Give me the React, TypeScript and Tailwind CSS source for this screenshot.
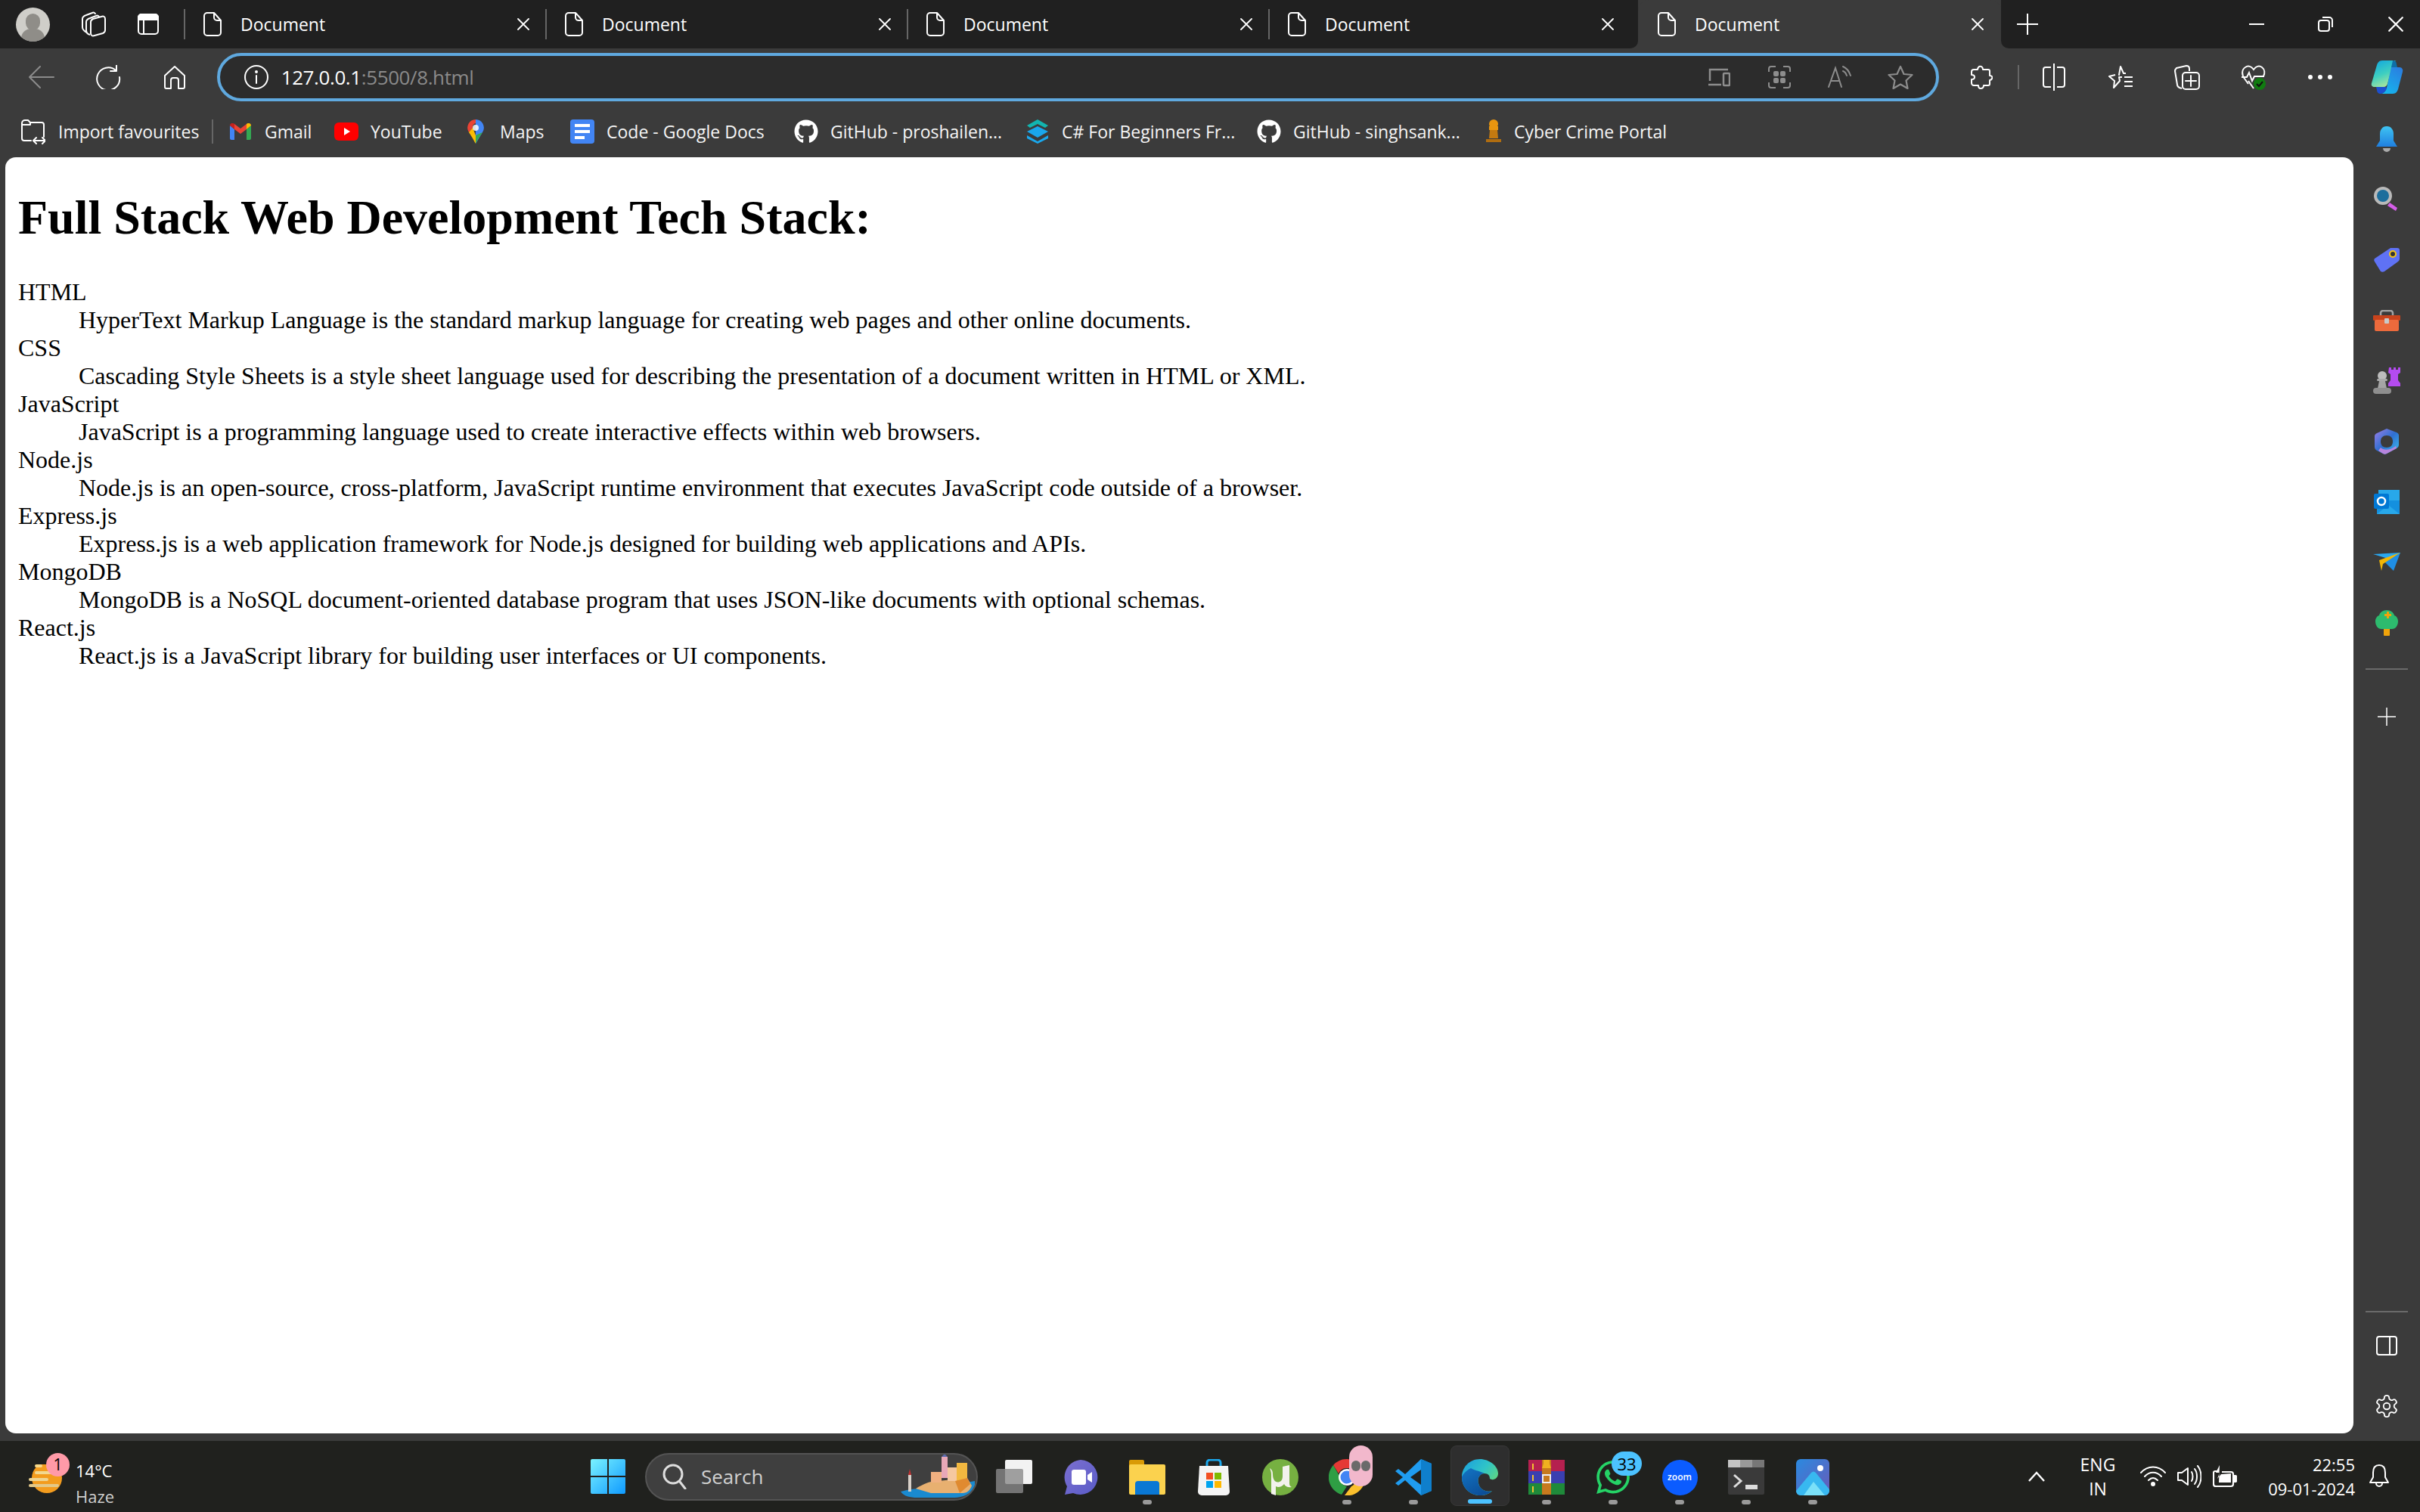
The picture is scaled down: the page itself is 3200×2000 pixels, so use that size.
import React from 'react';
import { FaGithub, FaWhatsapp } from 'react-icons/fa';

const UI_FONT = "font-['Open_Sans','Noto_Sans',sans-serif]";

const FileIcon = () => (
  <svg width="24" height="32" viewBox="0 0 24 32" fill="none" stroke="#fff" strokeWidth="2" strokeLinejoin="round">
    <path d="M1 5a4 4 0 014-4h9l9 10v16a4 4 0 01-4 4H5a4 4 0 01-4-4z" />
    <path d="M14 1v6a4 4 0 004 4h5" />
  </svg>
);

const CloseIcon = ({ size = 16 }: { size?: number }) => (
  <svg width={size} height={size} viewBox="0 0 16 16" stroke="#fff" strokeWidth="1.8" strokeLinecap="round">
    <path d="M1 1l14 14M15 1L1 15" />
  </svg>
);

const Divider = () => <div className="w-[2px] h-[40px] bg-[#666]" />;

const Tab = () => (
  <div className="w-[476px] h-[64px] flex items-center pl-[24px] pr-[21px]">
    <FileIcon />
    <span className="ml-[25px] text-[23px] text-white">Document</span>
    <span className="ml-auto flex">
      <CloseIcon />
    </span>
  </div>
);

const TabStrip = () => (
  <div className="flex h-[64px] bg-[#3b3b3b]">
    <div className="flex items-center w-[2166px] bg-[#202020] rounded-br-[10px]">
      <div className="ml-[21px] w-[45px] h-[45px] rounded-full bg-[#cfcec9] relative overflow-hidden">
        <div className="absolute left-[13px] top-[8px] w-[19px] h-[22px] rounded-full bg-[#8f8d88]" />
        <div className="absolute left-[7px] top-[28px] w-[31px] h-[26px] rounded-full bg-[#8f8d88]" />
      </div>
      <div className="ml-[41px] flex">
        <svg width="34" height="34" viewBox="0 0 34 34" fill="none" stroke="#fff" strokeWidth="2" strokeLinejoin="round">
          <path d="M8 28C4 26 2 24 2 21V10c0-3 2-4 5-5l8-3c2-1 4 0 4 2" />
          <path d="M12 31c-4-1-5-3-5-6V14c0-3 2-4 5-5l8-3c2-1 4 0 4 2" />
          <path d="M13 14c0-2 1-3 3-4l11-3c3-1 5 0 5 3v15c0 2-1 3-3 4l-11 3c-3 1-5 0-5-3z" />
        </svg>
      </div>
      <div className="ml-[41px] flex">
        <svg width="28" height="28" viewBox="0 0 28 28" fill="none" stroke="#fff" strokeWidth="2">
          <rect x="1" y="1" width="26" height="26" rx="4" />
          <path d="M1 8h26V5a4 4 0 00-4-4H5a4 4 0 00-4 4z" fill="#fff" />
          <path d="M8 8v19" />
        </svg>
      </div>
      <div className="ml-[33px]"><Divider /></div>
      <Tab />
      <Divider />
      <Tab />
      <Divider />
      <Tab />
      <Divider />
      <Tab />
    </div>
    <div className="w-[480px] h-[64px] flex items-center pl-[26px] pr-[23px] bg-[#3b3b3b] rounded-t-[14px]">
      <FileIcon />
      <span className="ml-[25px] text-[23px] text-white">Document</span>
      <span className="ml-auto flex">
        <CloseIcon />
      </span>
    </div>
    <div className="flex-1 flex items-center bg-[#202020] rounded-bl-[10px]">
      <svg className="ml-[21px]" width="28" height="28" viewBox="0 0 28 28" stroke="#fff" strokeWidth="2">
        <path d="M14 0v28M0 14h28" />
      </svg>
      <div className="ml-[279px] w-[20px] h-[2px] bg-white" />
      <svg className="ml-[71px]" width="20" height="20" viewBox="0 0 20 20" fill="none" stroke="#fff" strokeWidth="2">
        <rect x="1" y="5" width="14" height="14" rx="3" />
        <path d="M6 1h9a4 4 0 014 4v9" />
      </svg>
      <div className="ml-[73px] flex">
        <CloseIcon size={20} />
      </div>
    </div>
  </div>
);

const ToolCell = ({ children }: { children: React.ReactNode }) => (
  <div className="w-[88px] flex items-center justify-center">{children}</div>
);

const AddrCell = ({ children }: { children: React.ReactNode }) => (
  <div className="w-[80px] flex items-center justify-center">{children}</div>
);

const Toolbar = () => (
  <div className="h-[76px] flex items-center pl-[11px] bg-[#3b3b3b]">
    <ToolCell>
      <svg width="34" height="30" viewBox="0 0 34 30" fill="none" stroke="#8b8b8b" strokeWidth="2" strokeLinecap="round" strokeLinejoin="round">
        <path d="M15 1L1 15l14 14M1 15h32" />
      </svg>
    </ToolCell>
    <ToolCell>
      <svg width="34" height="32" viewBox="0 0 34 32" fill="none" stroke="#fff" strokeWidth="2" strokeLinecap="round" strokeLinejoin="round">
        <path d="M27 7A15 15 0 1032 16" />
        <path d="M28 0v8h-8" />
      </svg>
    </ToolCell>
    <ToolCell>
      <svg width="30" height="32" viewBox="0 0 30 32" fill="none" stroke="#fff" strokeWidth="2" strokeLinejoin="round">
        <path d="M2 14L15 2l13 12v15a2 2 0 01-2 2h-6V20a3 3 0 00-3-3h-4a3 3 0 00-3 3v11H4a2 2 0 01-2-2z" />
      </svg>
    </ToolCell>
    <div className="ml-[12px] w-[2280px] h-[64px] flex items-center rounded-full border-[4px] border-[#5fa9df] bg-[#2c2c2c] pl-[32px] pr-[7px]">
      <svg width="32" height="32" viewBox="0 0 32 32" fill="none" stroke="#fff" strokeWidth="2" strokeLinecap="round">
        <circle cx="16" cy="16" r="15" />
        <path d="M16 14v10" />
        <circle cx="16" cy="9" r="1" fill="#fff" />
      </svg>
      <span className="ml-[17px] text-[26px] text-white tracking-[-0.4px]">
        127.0.0.1<span className="text-[#8a8a8a]">:5500/8.html</span>
      </span>
      <div className="ml-auto flex">
        <AddrCell>
          <svg width="30" height="26" viewBox="0 0 30 26" fill="none" stroke="#8d8d8d" strokeWidth="2.5">
            <path d="M3 18V3h24M1 23h17" />
            <rect x="21" y="8" width="8" height="16" rx="1" />
          </svg>
        </AddrCell>
        <AddrCell>
          <svg width="30" height="30" viewBox="0 0 30 30" fill="none" stroke="#8d8d8d" strokeWidth="2">
            <path d="M1 8V4a3 3 0 013-3h6M20 1h6a3 3 0 013 3v4M29 22v4a3 3 0 01-3 3h-6M10 29H4a3 3 0 01-3-3v-4" />
            <g fill="#8d8d8d" stroke="none">
              <rect x="7" y="7" width="7" height="7" rx="2" />
              <rect x="16" y="7" width="7" height="7" rx="2" />
              <rect x="7" y="16" width="7" height="7" rx="2" />
              <rect x="16" y="16" width="7" height="7" rx="2" />
            </g>
          </svg>
        </AddrCell>
        <AddrCell>
          <svg width="32" height="30" viewBox="0 0 32 30" fill="none" stroke="#8d8d8d" strokeWidth="2" strokeLinecap="round">
            <path d="M1 28L10 3l8 25M4 20h11" />
            <path d="M20 1c5 2 8 6 10 12M20 7c3 1 4 3 5 6" />
          </svg>
        </AddrCell>
        <AddrCell>
          <svg width="34" height="32" viewBox="0 0 34 32" fill="none" stroke="#8d8d8d" strokeWidth="2.2" strokeLinejoin="round">
            <path d="M17 2l4.5 10 11 1-8 7.5 2 10.5-9.500-5.500L7.500 31l2-10.500-8-7.500 11-1z" />
          </svg>
        </AddrCell>
      </div>
    </div>
    <div className="ml-[12px] flex">
      <ToolCell>
        <svg width="30" height="32" viewBox="0 0 30 32" fill="none" stroke="#fff" strokeWidth="2" strokeLinejoin="round">
          <path d="M12 2c3-1 5 1 5 4h7c1 0 2 1 2 2v6c3 0 4 2 3 4s-3 2-3 2v5c0 1-1 2-2 2h-6c0 3-2 4-4 4s-3-2-3-4H5c-2 0-3-2-3-3v-5c2 0 4-1 4-3s-2-3-4-3V9c0-2 1-3 3-3h5c0-2 1-3 2-4z" />
        </svg>
      </ToolCell>
      <div className="w-[2px] h-[32px] bg-[#666] self-center ml-[4px] mr-[2px]" />
      <ToolCell>
        <svg width="30" height="36" viewBox="0 0 30 36" fill="none" stroke="#fff" strokeWidth="2">
          <path d="M15 0v36" />
          <path d="M11 5H4a3 3 0 00-3 3v20a3 3 0 003 3h7M19 5h7a3 3 0 013 3v20a3 3 0 01-3 3h-7" />
        </svg>
      </ToolCell>
      <ToolCell>
        <svg width="32" height="32" viewBox="0 0 32 32" fill="none" stroke="#fff" strokeWidth="2" strokeLinejoin="round">
          <path d="M15 13h-1l2-11 4 9h3M18 16h-4l1 5-8 9 1-9-7-6 8-2" />
          <path d="M21 16h11M21 22h11M21 28h11" />
        </svg>
      </ToolCell>
      <ToolCell>
        <svg width="34" height="34" viewBox="0 0 34 34" fill="none" stroke="#fff" strokeWidth="2" strokeLinejoin="round">
          <path d="M10 32l-3-1c-2-1-3-2-3-4L1 9c0-2 1-3 2-4l13-3c2 0 4 1 4 4v3" />
          <rect x="11" y="11" width="22" height="22" rx="4" />
          <path d="M22 15v14M15 22h14" strokeLinecap="round" />
        </svg>
      </ToolCell>
      <ToolCell>
        <svg width="34" height="34" viewBox="0 0 34 34" fill="none">
          <path d="M10 26l-5-7C1 14 1 7 6 4c4-3 8-1 11 3 3-4 7-6 11-3 4 3 4 8 2 12" stroke="#fff" strokeWidth="2" />
          <path d="M1 17h7l3-6 4 11 3-6h13" stroke="#fff" strokeWidth="2" />
          <path d="M10 22l7 10" stroke="#fff" strokeWidth="2" />
          <circle cx="25" cy="26" r="8" fill="#107c10" />
          <path d="M21 26l3 3 5-6" stroke="#111" strokeWidth="2" />
        </svg>
      </ToolCell>
      <ToolCell>
        <div className="flex gap-[7px]">
          <div className="w-[6px] h-[6px] rounded-full bg-white" />
          <div className="w-[6px] h-[6px] rounded-full bg-white" />
          <div className="w-[6px] h-[6px] rounded-full bg-white" />
        </div>
      </ToolCell>
      <ToolCell>
        <svg width="44" height="44" viewBox="0 0 44 44">
          <defs>
            <linearGradient id="cpA" x1="0" y1="0" x2="0.4" y2="1">
              <stop offset="0" stopColor="#0ea5e2" />
              <stop offset="0.6" stopColor="#3fcfc0" />
              <stop offset="1" stopColor="#9fe3a0" />
            </linearGradient>
            <linearGradient id="cpB" x1="0.8" y1="0" x2="0.2" y2="1">
              <stop offset="0" stopColor="#2a7fe0" />
              <stop offset="1" stopColor="#15b6ee" />
            </linearGradient>
          </defs>
          <path d="M30 0h-14c-4 0-6 3-7 6L2 30c-1 3 1 5 4 5h12c3 0 4-2 5-4l6-22c1-4 3-9 6-9z" fill="url(#cpA)" />
          <path d="M30 0c3 0 5 2 5 5l1 4-8 0z" fill="#0e6fa8" />
          <path d="M14 44h16c4 0 6-3 7-6l6-23c1-3-1-6-4-6H28l-6 27c-1 4-4 8-8 8z" fill="url(#cpB)" />
          <path d="M14 44c-3 0-5-2-5-5l-1-4h12l2 1c-1 4-4 8-8 8z" fill="#1c4fd0" />
        </svg>
      </ToolCell>
    </div>
  </div>
);

const Gmail = () => (
  <svg width="28" height="22" viewBox="0 0 28 22">
    <path d="M0 3v17a2 2 0 002 2h4V8z" fill="#4285f4" />
    <path d="M28 3v17a2 2 0 01-2 2h-4V8z" fill="#34a853" />
    <path d="M6 8l8 6 8-6V1l-8 6-8-6z" fill="#ea4335" />
    <path d="M0 3c0-3 4-4 6-2v7L0 3z" fill="#c5221f" />
    <path d="M28 3c0-3-4-4-6-2v7l6-5z" fill="#fbbc04" />
  </svg>
);

const YouTube = () => (
  <svg width="32" height="24" viewBox="0 0 32 24">
    <rect width="32" height="24" rx="6" fill="#f00" />
    <path d="M13 7l8 5-8 5z" fill="#fff" />
  </svg>
);

const MapsPin = () => (
  <svg width="22" height="32" viewBox="0 0 22 32">
    <path d="M11 0a11 11 0 019 17L11 32z" fill="#4285f4" />
    <path d="M11 0A11 11 0 002 17l5-6a5 5 0 014-6z" fill="#ea4335" />
    <path d="M2 17c2 3 4 6 9 15l0-11-4-10z" fill="#fbbc04" />
    <path d="M11 32c2-5 5-9 9-15l-9 4z" fill="#34a853" />
    <circle cx="11" cy="11" r="4" fill="#fff" opacity="0.85" />
  </svg>
);

const DocsIcon = () => (
  <svg width="32" height="32" viewBox="0 0 32 32">
    <rect width="32" height="32" rx="4" fill="#4285f4" />
    <path d="M6 6h20v4H6zM6 14h20v4H6zM6 22h13v4H6z" fill="#fff" />
  </svg>
);

const StackIcon = () => (
  <svg width="32" height="32" viewBox="0 0 32 32">
    <path d="M16 0l14 8-4 3-10-5-10 5-4-3z" fill="#12b5b0" />
    <path d="M16 9l14 7-14 8-14-8z" fill="#1aa7ec" />
    <path d="M2 21l14 8 14-8v4l-14 7-14-7z" fill="#1aa7ec" />
  </svg>
);

const Emblem = () => (
  <svg width="22" height="32" viewBox="0 0 22 32" fill="#e8950f">
    <circle cx="11" cy="6" r="6" />
    <rect x="5" y="9" width="12" height="5" />
    <path d="M6 14h10l1 11H5z" fill="#c47a10" />
    <rect x="1" y="26" width="20" height="4" fill="#b06d10" />
  </svg>
);

const Bookmark = ({ icon, label, width }: { icon: React.ReactNode; label: string; width: string }) => (
  <div className={`flex items-center ${width}`}>
    <div className="w-[32px] flex justify-center">{icon}</div>
    <span className="ml-[16px] text-[23px] text-[#f5f5f5] whitespace-nowrap">{label}</span>
  </div>
);

const BookmarksBar = () => (
  <div className="h-[68px] flex items-center pl-[28px]">
    <svg width="32" height="34" viewBox="0 0 32 34" fill="none" stroke="#fff" strokeWidth="2" strokeLinecap="round" strokeLinejoin="round">
      <path d="M13 29H4a3 3 0 01-3-3V6a4 4 0 014-4h4l3 3h15a3 3 0 013 3v16" />
      <path d="M1 8h11V5" />
      <path d="M17 29h14M20 25l-4 4 4 4M28 25l4 4-4 4" />
    </svg>
    <span className="ml-[17px] text-[23px] text-[#f5f5f5] whitespace-nowrap w-[203px]">Import favourites</span>
    <div className="w-[2px] h-[32px] bg-[#666] mr-[20px]" />
    <Bookmark icon={<Gmail />} label="Gmail" width="w-[140px]" />
    <Bookmark icon={<YouTube />} label="YouTube" width="w-[171px]" />
    <Bookmark icon={<MapsPin />} label="Maps" width="w-[141px]" />
    <Bookmark icon={<DocsIcon />} label="Code - Google Docs" width="w-[296px]" />
    <Bookmark icon={<FaGithub className="text-white text-[32px]" />} label="GitHub - proshailen..." width="w-[306px]" />
    <Bookmark icon={<StackIcon />} label="C# For Beginners Fr..." width="w-[306px]" />
    <Bookmark icon={<FaGithub className="text-white text-[32px]" />} label="GitHub - singhsank..." width="w-[302px]" />
    <Bookmark icon={<Emblem />} label="Cyber Crime Portal" width="w-[240px]" />
  </div>
);

const STACK = [
  ['HTML', 'HyperText Markup Language is the standard markup language for creating web pages and other online documents.'],
  ['CSS', 'Cascading Style Sheets is a style sheet language used for describing the presentation of a document written in HTML or XML.'],
  ['JavaScript', 'JavaScript is a programming language used to create interactive effects within web browsers.'],
  ['Node.js', 'Node.js is an open-source, cross-platform, JavaScript runtime environment that executes JavaScript code outside of a browser.'],
  ['Express.js', 'Express.js is a web application framework for Node.js designed for building web applications and APIs.'],
  ['MongoDB', 'MongoDB is a NoSQL document-oriented database program that uses JSON-like documents with optional schemas.'],
  ['React.js', 'React.js is a JavaScript library for building user interfaces or UI components.'],
];

const Page = () => (
  <div className="ml-[7px] flex-1 rounded-[14px] bg-white pt-[43px] px-[17px] text-black font-['Liberation_Serif',serif]">
    <h1 className="text-[64px] leading-[74px] font-bold mb-[43px]">Full Stack Web Development Tech Stack:</h1>
    <dl className="text-[32px] leading-[37px]">
      {STACK.map(([term, desc]) => (
        <React.Fragment key={term}>
          <dt>{term}</dt>
          <dd className="ml-[80px]">{desc}</dd>
        </React.Fragment>
      ))}
    </dl>
  </div>
);

const SideCell = ({ children }: { children: React.ReactNode }) => (
  <div className="h-[80px] flex items-center justify-center">{children}</div>
);

const Sidebar = () => (
  <div className="w-[88px] flex flex-col pt-[4px] pb-[6px]">
    <SideCell>
      <svg width="28" height="34" viewBox="0 0 28 34">
        <defs>
          <linearGradient id="sbBell" x1="0" y1="0" x2="0" y2="1">
            <stop offset="0" stopColor="#3fc4f2" />
            <stop offset="1" stopColor="#1f7fe0" />
          </linearGradient>
        </defs>
        <path d="M9 29h10a5 5 0 01-10 0z" fill="#aaa" />
        <path d="M14 0c6 0 9 5 9 10v9l5 8H0l5-8v-9C5 5 8 0 14 0z" fill="url(#sbBell)" />
      </svg>
    </SideCell>
    <SideCell>
      <svg width="34" height="34" viewBox="0 0 34 34">
        <circle cx="12" cy="12" r="10" fill="#1d6e9c" stroke="#b9b9b9" strokeWidth="4" />
        <path d="M21 21l10 7-2 4-11-7z" fill="#d45ee8" />
      </svg>
    </SideCell>
    <SideCell>
      <svg width="34" height="32" viewBox="0 0 34 32">
        <path d="M22 0h9a3 3 0 013 3v11c0 2-1 3-2 4L14 31c-2 1-3 1-5 0L1 18c-1-1-1-3 0-4z" fill="#5f72f5" />
        <circle cx="25" cy="8" r="4" fill="#333" stroke="#f5c518" strokeWidth="2" />
      </svg>
    </SideCell>
    <SideCell>
      <svg width="36" height="28" viewBox="0 0 36 28">
        <path d="M10 8V4a3 3 0 013-3h10a3 3 0 013 3v4" fill="none" stroke="#a3a3a3" strokeWidth="2.5" />
        <rect y="7" width="36" height="7" rx="1" fill="#c8431c" />
        <rect x="2" y="13" width="32" height="15" rx="2" fill="#ec6a3c" />
        <rect x="15" y="11" width="6" height="7" rx="1" fill="#c9c9c9" />
      </svg>
    </SideCell>
    <SideCell>
      <svg width="36" height="36" viewBox="0 0 36 36">
        <path d="M21 0h3v3h3V0h3v3h3V0h3v7l-3 2v8l3 4v4H20v-4l3-4V9l-3-2z" fill="#b44bf0" />
        <circle cx="12" cy="11" r="6" fill="#bdbdbd" />
        <rect x="5" y="15" width="14" height="3" rx="1.500" fill="#aaa" />
        <path d="M8 18h8l2 10H6z" fill="#a5a5a5" />
        <rect y="27" width="24" height="8" rx="4" fill="#8f8f8f" />
      </svg>
    </SideCell>
    <SideCell>
      <svg width="32" height="34" viewBox="0 0 32 34">
        <defs>
          <linearGradient id="sbM" x1="0" y1="0" x2="1" y2="1">
            <stop offset="0" stopColor="#9c7ee8" />
            <stop offset="0.5" stopColor="#2f6fd0" />
            <stop offset="1" stopColor="#3ec0f0" />
          </linearGradient>
        </defs>
        <path d="M16 0l13 5c2 1 3 2 3 4v12c0 2-1 4-3 5l-13 7c-2 1-3 1-5 0L3 29c-2-1-3-3-3-5V10c0-2 1-3 3-4z" fill="url(#sbM)" />
        <path d="M16 9c5 0 8 3 8 8s-3 8-8 8-8-3-8-8 3-8 8-8z" fill="#3b3b3b" />
        <path d="M8 25c4 4 12 4 20-2l1 3-13 7c-2 1-3 1-5 0l-6-4z" fill="#b884dc" />
      </svg>
    </SideCell>
    <SideCell>
      <svg width="34" height="32" viewBox="0 0 34 32">
        <rect x="6" y="0" width="28" height="16" fill="#28a8ea" />
        <path d="M4 14h30v18H4z" fill="#1490df" />
        <path d="M4 32l15-12 15 12z" fill="#28a8ea" />
        <rect x="0" y="5" width="20" height="20" rx="2" fill="#0078d4" />
        <circle cx="10" cy="15" r="5" fill="none" stroke="#fff" strokeWidth="2.500" />
      </svg>
    </SideCell>
    <SideCell>
      <svg width="36" height="26" viewBox="0 0 36 26">
        <path d="M0 2l36-2-9 13L20 8z" fill="#2aa8f0" />
        <path d="M36 0L27 24 15 12z" fill="#1f8fe6" />
        <path d="M36 0L8 10l3 14 2-9z" fill="#f2b705" />
      </svg>
    </SideCell>
    <SideCell>
      <svg width="30" height="34" viewBox="0 0 30 34">
        <rect x="11" y="22" width="8" height="12" rx="1" fill="#f0a30a" />
        <path d="M15 0c5 0 9 3 10 7 3 1 5 4 5 8 0 5-3 10-8 10H8c-5 0-8-5-8-10 0-4 2-7 5-8 1-4 5-7 10-7z" fill="#2dbb6e" />
        <path d="M15 2h3v3h3v3h-3v3h-3V8h-3V5h3z" fill="#f0a30a" />
      </svg>
    </SideCell>
    <div className="mt-[20px] mx-[16px] h-[2px] bg-[#6a6a6a]" />
    <div className="mt-[22px]">
      <SideCell>
        <svg width="24" height="24" viewBox="0 0 24 24" stroke="#fff" strokeWidth="1.500">
          <path d="M12 0v24M0 12h24" />
        </svg>
      </SideCell>
    </div>
    <div className="mt-auto mb-[4px] mx-[16px] h-[2px] bg-[#6a6a6a]" />
    <SideCell>
      <svg width="28" height="26" viewBox="0 0 28 26" fill="none" stroke="#fff" strokeWidth="2">
        <rect x="1" y="1" width="26" height="24" rx="3" />
        <path d="M18 1v24" />
      </svg>
    </SideCell>
    <SideCell>
      <svg width="34" height="34" viewBox="0 0 24 24" fill="none" stroke="#fff" strokeWidth="1.300" strokeLinecap="round" strokeLinejoin="round">
        <path d="M12.220 2h-.44a2 2 0 0 0-2 2v.18a2 2 0 0 1-1 1.730l-.43.250a2 2 0 0 1-2 0l-.15-.080a2 2 0 0 0-2.730.730l-.22.380a2 2 0 0 0 .730 2.730l.15.100a2 2 0 0 1 1 1.720v.510a2 2 0 0 1-1 1.740l-.15.090a2 2 0 0 0-.730 2.730l.22.380a2 2 0 0 0 2.730.730l.15-.080a2 2 0 0 1 2 0l.43.250a2 2 0 0 1 1 1.730V20a2 2 0 0 0 2 2h.44a2 2 0 0 0 2-2v-.18a2 2 0 0 1 1-1.730l.43-.250a2 2 0 0 1 2 0l.15.080a2 2 0 0 0 2.730-.730l.22-.390a2 2 0 0 0-.730-2.730l-.15-.080a2 2 0 0 1-1-1.740v-.500a2 2 0 0 1 1-1.740l.15-.090a2 2 0 0 0 .730-2.730l-.22-.380a2 2 0 0 0-2.730-.730l-.15.080a2 2 0 0 1-2 0l-.43-.250a2 2 0 0 1-1-1.730V4a2 2 0 0 0-2-2z" />
        <circle cx="12" cy="12" r="3" />
      </svg>
    </SideCell>
  </div>
);

const TaskCell = ({ children, dot, active }: { children: React.ReactNode; dot?: boolean; active?: boolean }) => (
  <div className="w-[88px] h-[94px] relative flex justify-center pt-[24px]">
    {active && <div className="absolute left-[5px] top-[6px] w-[78px] h-[80px] rounded-[8px] bg-[#2e2e2e] border border-[#383838]" />}
    <div className="relative h-[48px] flex items-center justify-center">{children}</div>
    {dot && <div className="absolute left-[38px] top-[78px] w-[12px] h-[6px] rounded-full bg-[#9a9a9a]" />}
    {active && <div className="absolute left-[28px] top-[77px] w-[32px] h-[6px] rounded-full bg-[#4cc2ff]" />}
  </div>
);

const SearchScene = () => (
  <svg width="98" height="60" viewBox="0 0 98 60">
    <path d="M0 50c20-6 70-8 98-14v8c-6 10-16 14-30 14H22C12 58 4 56 0 50z" fill="#1a8ad0" />
    <path d="M20 46c10-6 18-10 30-10l38-4 6 10c-2 6-6 10-12 10H40z" fill="#e8b070" />
    <rect x="10" y="28" width="4" height="22" fill="#d8d0c8" />
    <path d="M10 28l2-8 2 8z" fill="#c03030" />
    <rect x="54" y="4" width="8" height="28" fill="#e8a8b8" />
    <rect x="40" y="24" width="14" height="14" fill="#f0b080" />
    <rect x="62" y="18" width="12" height="18" fill="#f5c8a0" />
    <rect x="74" y="12" width="14" height="24" fill="#f2b840" />
    <path d="M54 4l4-4 4 4z" fill="#5a6ab0" />
    <path d="M72 36l6 16 14-12-4-8z" fill="#e08a30" />
  </svg>
);

const Chrome = () => (
  <svg width="48" height="48" viewBox="0 0 48 48">
    <path d="M24 0a24 24 0 0121 12H24a12 12 0 00-11 7L6 8a24 24 0 0118-8z" fill="#e53935" />
    <path d="M6 8l8 14a12 12 0 0010 14l-7 11A24 24 0 016 8z" fill="#2f9e44" />
    <path d="M45 12a24 24 0 01-24 36l9-12a12 12 0 004-18z" fill="#fbc02d" />
    <circle cx="24" cy="24" r="11" fill="#fff" />
    <circle cx="24" cy="24" r="8.500" fill="#4285f4" />
  </svg>
);

const Edge = () => (
  <svg width="48" height="48" viewBox="0 0 48 48">
    <defs>
      <linearGradient id="edgeTop" x1="0" y1="0" x2="1" y2="0.800">
        <stop offset="0" stopColor="#1a9ce0" />
        <stop offset="0.5" stopColor="#2fc4c8" />
        <stop offset="1" stopColor="#72dc66" />
      </linearGradient>
      <linearGradient id="edgeLow" x1="0" y1="0" x2="0.600" y2="1">
        <stop offset="0" stopColor="#1374c4" />
        <stop offset="1" stopColor="#0c4f98" />
      </linearGradient>
    </defs>
    <path d="M24 0C10 0 0 11 0 24c0 14 11 24 24 24 7 0 12-2 16-6-6 2-16 0-18-10-2-7 2-13 8-13 5 0 7 3 7 7 4 3 11 0 11-7C48 9 36 0 24 0z" fill="url(#edgeTop)" />
    <path d="M12 12C4 16 0 22 0 24c0 14 11 24 24 24 7 0 12-2 16-6-6 2-16 0-18-10-2-7 2-13 8-13-8-4-14-4-18-7z" fill="url(#edgeLow)" />
  </svg>
);

const VsCode = () => (
  <svg width="48" height="48" viewBox="0 0 48 48">
    <path d="M34 0l14 6v36l-14 6L13 28l-9 7-4-3 10-8L0 16l4-3 9 7z" fill="#1f9cf0" />
    <path d="M34 0v48l14-6V6z" fill="#0f7fcc" />
    <path d="M34 13L20 24l14 11z" fill="#20212000" />
    <path d="M34 14L20 24l14 10z" fill="#20211e" />
  </svg>
);

const WinRar = () => (
  <svg width="48" height="46" viewBox="0 0 48 46">
    <rect y="0" width="48" height="15" fill="#b5204f" />
    <rect y="15" width="48" height="16" fill="#3a3fb0" />
    <rect y="31" width="48" height="15" fill="#1f8a3a" />
    <rect x="18" y="0" width="12" height="46" fill="#c77a1e" />
    <rect x="5" y="5" width="2" height="8" fill="#f2c230" />
    <rect x="5" y="20" width="2" height="8" fill="#f2c230" />
    <rect x="5" y="35" width="2" height="8" fill="#f2c230" />
    <rect x="19" y="20" width="10" height="10" fill="none" stroke="#eee" strokeWidth="2" />
    <path d="M20 0h8v5l2 6H18l2-6z" fill="#f0b020" />
  </svg>
);

const Terminal = () => (
  <svg width="48" height="46" viewBox="0 0 48 46">
    <rect width="48" height="46" rx="2" fill="#3a3a3a" />
    <rect width="16" height="10" fill="#c4c4c4" />
    <rect x="16" width="16" height="10" fill="#999" />
    <rect x="32" width="16" height="10" fill="#777" />
    <path d="M8 20l9 8-9 8" fill="none" stroke="#ddd" strokeWidth="3" />
    <rect x="23" y="33" width="16" height="6" fill="#ddd" />
  </svg>
);

const Photos = () => (
  <svg width="44" height="48" viewBox="0 0 44 48">
    <defs>
      <linearGradient id="phBg" x1="0" y1="0" x2="1" y2="1">
        <stop offset="0" stopColor="#2a8ae0" />
        <stop offset="1" stopColor="#6a5ab8" />
      </linearGradient>
    </defs>
    <rect width="44" height="48" rx="6" fill="url(#phBg)" />
    <circle cx="32" cy="12" r="4" fill="#fff" />
    <path d="M0 42L20 18c2-2 4-2 6 0l18 22v2a6 6 0 01-6 6H6a6 6 0 01-6-6z" fill="#38b8f0" />
    <path d="M10 48L23 30l15 18z" fill="#7ae0f8" />
  </svg>
);

const Taskbar = () => (
  <div className="h-[94px] flex bg-[#20211e] text-white">
    <div className="w-[760px] flex pl-[38px] pt-[18px]">
      <div className="relative w-[62px] flex items-center h-[56px]">
        <svg width="48" height="38" viewBox="0 0 48 38" className="mt-[8px]">
          <circle cx="24" cy="18" r="20" fill="#f39c1e" />
          <rect x="8" y="0" width="10" height="4" rx="2" fill="#f7d98a" />
          <rect x="8" y="9" width="38" height="4" rx="2" fill="#f2d890" />
          <rect x="0" y="18" width="26" height="4" rx="2" fill="#efd592" />
          <rect x="0" y="26" width="40" height="4" rx="2" fill="#e3c888" />
        </svg>
        <div className="absolute left-[23px] top-[-2px] w-[31px] h-[31px] rounded-full bg-[#ff9aa8] text-black text-[21px] flex items-center justify-center">1</div>
      </div>
      <div className="flex flex-col leading-[34px] mt-[4px]">
        <span className="text-[22px]">14°C</span>
        <span className="text-[22px] text-[#cfcfcf]">Haze</span>
      </div>
    </div>
    <div className="w-[88px] flex items-center justify-center">
      <svg width="46" height="46" viewBox="0 0 46 46">
        <defs>
          <linearGradient id="winLogo" x1="0" y1="0" x2="1" y2="1">
            <stop offset="0" stopColor="#7af3ff" />
            <stop offset="1" stopColor="#0f9aff" />
          </linearGradient>
        </defs>
        <path d="M0 2a2 2 0 012-2h20v22H0zM24 0h20a2 2 0 012 2v20H24zM0 24h22v22H2a2 2 0 01-2-2zM24 24h22v20a2 2 0 01-2 2H24z" fill="url(#winLogo)" />
      </svg>
    </div>
    <div className="ml-[5px] self-center w-[440px] h-[63px] rounded-full bg-[#3f3f3f] border-[2px] border-[#545454] flex items-center pl-[21px] relative overflow-hidden">
      <svg width="32" height="34" viewBox="0 0 32 34" fill="none" stroke="#ddd" strokeWidth="3" strokeLinecap="round">
        <circle cx="14" cy="14" r="12" />
        <path d="M23 24l7 9" />
      </svg>
      <span className="ml-[19px] text-[26px] text-[#d0d0d0]">Search</span>
      <div className="ml-auto mr-[2px] flex">
        <SearchScene />
      </div>
    </div>
    <div className="ml-[4px] flex">
      <TaskCell>
        <div className="relative w-[48px] h-[46px]">
          <div className="absolute left-[12px] top-0 w-[36px] h-[32px] rounded-[2px] bg-[#f2f2f2]" />
          <div className="absolute left-0 top-[12px] w-[36px] h-[32px] rounded-[2px] bg-[#8a8a8a]/80" />
        </div>
      </TaskCell>
      <TaskCell>
        <svg width="46" height="46" viewBox="0 0 46 46">
          <defs>
            <linearGradient id="teamsBg" x1="0" y1="0" x2="1" y2="1">
              <stop offset="0" stopColor="#7b6fd0" />
              <stop offset="1" stopColor="#5a5cc8" />
            </linearGradient>
          </defs>
          <path d="M23 0a23 23 0 11-10 44l-11 2 3-11A23 23 0 0123 0z" fill="url(#teamsBg)" />
          <rect x="11" y="13" width="19" height="20" rx="3" fill="#fff" />
          <path d="M32 20l6-4v14l-6-4z" fill="#fff" />
        </svg>
      </TaskCell>
      <TaskCell dot>
        <div className="relative w-[48px] h-[46px]">
          <div className="absolute left-0 top-0 w-[20px] h-[10px] rounded-t-[2px] bg-[#d99a06]" />
          <div className="absolute left-0 top-[6px] w-[48px] h-[40px] rounded-[2px] bg-[#fbd24e]" />
          <div className="absolute left-[8px] top-[28px] w-[32px] h-[18px] rounded-t-[4px] bg-[#0a78d4]" />
        </div>
      </TaskCell>
      <TaskCell>
        <svg width="42" height="48" viewBox="0 0 42 48">
          <path d="M12 12V5a4 4 0 014-4h10a4 4 0 014 4v7" fill="none" stroke="#1aa7ec" strokeWidth="3" />
          <path d="M2 9h38l2 34a5 5 0 01-5 5H5a5 5 0 01-5-5z" fill="#f4f4f4" />
          <rect x="11" y="18" width="9" height="9" fill="#f25022" />
          <rect x="22" y="18" width="9" height="9" fill="#7fba00" />
          <rect x="11" y="29" width="9" height="9" fill="#00a4ef" />
          <rect x="22" y="29" width="9" height="9" fill="#ffb900" />
        </svg>
      </TaskCell>
      <TaskCell>
        <svg width="48" height="48" viewBox="0 0 48 48">
          <circle cx="24" cy="24" r="24" fill="#76b041" />
          <path d="M10 12c3 2 4 4 4 8 0 8 4 12 9 10 3-1 4-4 4-8v-12l9-2v24c0 3 1 4 3 5-4 1-8 0-10-4-3 4-8 5-11 3v12l-6-2V20c0-3-1-5-2-8z" fill="#f2f2ec" />
        </svg>
      </TaskCell>
      <TaskCell dot>
        <Chrome />
        <div className="absolute left-[27px] top-[-18px] w-[31px] h-[54px] rounded-full bg-[#f2b8cc] flex items-center justify-center gap-[1px]">
          <div className="w-[12px] h-[14px] rounded-full bg-[#6a6a6a]" />
          <div className="w-[12px] h-[14px] rounded-full bg-[#6a6a6a]" />
        </div>
      </TaskCell>
      <TaskCell dot>
        <VsCode />
      </TaskCell>
      <TaskCell active>
        <Edge />
      </TaskCell>
      <TaskCell dot>
        <WinRar />
      </TaskCell>
      <TaskCell dot>
        <FaWhatsapp className="text-[#25d366] text-[50px]" />
        <div className="absolute left-[23px] top-[-10px] w-[40px] h-[32px] rounded-full bg-[#4cc2ff] text-black text-[22px] flex items-center justify-center">33</div>
      </TaskCell>
      <TaskCell dot>
        <div className="w-[47px] h-[47px] rounded-full bg-[#0b5cff] flex items-center justify-center text-[12px] font-semibold text-white">zoom</div>
      </TaskCell>
      <TaskCell dot>
        <Terminal />
      </TaskCell>
      <TaskCell dot>
        <Photos />
      </TaskCell>
    </div>
    <div className="flex-1 flex items-center pl-[241px]">
      <svg width="22" height="14" viewBox="0 0 22 14" fill="none" stroke="#fff" strokeWidth="2.400">
        <path d="M1 13L11 2l10 11" />
      </svg>
      <div className="ml-[42px] w-[56px] text-center text-[23px] leading-[32px]">
        <div>ENG</div>
        <div>IN</div>
      </div>
      <svg className="ml-[28px]" width="34" height="28" viewBox="0 0 34 28" fill="none" stroke="#fff" strokeWidth="2" strokeLinecap="round">
        <path d="M1 9c9-10 23-10 32 0M6 14c6-7 16-7 22 0M11 19c4-4 8-4 12 0" />
        <circle cx="17" cy="24" r="2" fill="#fff" />
      </svg>
      <svg className="ml-[15px]" width="32" height="30" viewBox="0 0 32 30" fill="none" stroke="#fff" strokeWidth="2" strokeLinejoin="round" strokeLinecap="round">
        <path d="M1 10h5l8-6v22l-8-6H1z" />
        <path d="M19 9c2 3 2 9 0 12M23 5c4 5 4 15 0 20M27 1c6 7 6 21 0 28" />
      </svg>
      <svg className="ml-[15px]" width="32" height="30" viewBox="0 0 32 30" fill="none" stroke="#fff" strokeWidth="2.200">
        <path d="M6 8H3a2 2 0 00-2 2v15a3 3 0 003 3h20a3 3 0 003-3V12a3 3 0 00-3-3H12" />
        <path d="M28 14h2a1 1 0 011 1v6a1 1 0 01-1 1h-2" fill="#fff" />
        <path d="M9 0L4 10h5l-3 8 5-6 13-1v12H8z" fill="#fff" stroke="none" />
      </svg>
      <div className="ml-[30px] w-[126px] text-right text-[22px] leading-[32px] whitespace-nowrap">
        <div>22:55</div>
        <div>09-01-2024</div>
      </div>
      <svg className="ml-[19px]" width="26" height="32" viewBox="0 0 26 32" fill="none" stroke="#fff" strokeWidth="2" strokeLinejoin="round">
        <path d="M13 1c6 0 8 5 8 10v6l4 7H1l4-7v-6C5 6 7 1 13 1z" />
        <path d="M9 25a4 4 0 008 0" />
      </svg>
    </div>
  </div>
);

export default function App() {
  return (
    <div className={`w-[3200px] h-[2000px] overflow-hidden flex flex-col bg-[#3b3b3b] ${UI_FONT}`}>
      <TabStrip />
      <Toolbar />
      <div className="h-[1766px] flex">
        <div className="w-[3112px] flex flex-col pb-[10px]">
          <BookmarksBar />
          <Page />
        </div>
        <Sidebar />
      </div>
      <Taskbar />
    </div>
  );
}
